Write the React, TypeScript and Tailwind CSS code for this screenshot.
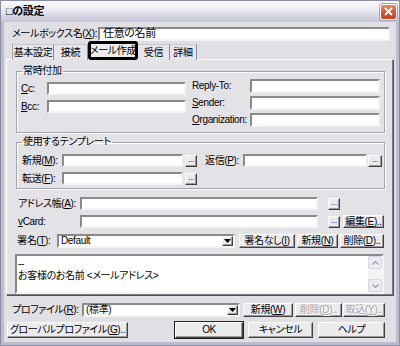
import React from "react";

const inp =
  "bg-white border-2 border-t-[#8a8a8a] border-l-[#8a8a8a] border-r-[#f4f4f4] border-b-[#f4f4f4]";
const btn =
  "flex items-center justify-center bg-[#ebebee] border border-t-white border-l-white border-r-[#404040] border-b-[#404040] shadow-[inset_-1px_-1px_0_#9a9a9a]";
const grp =
  "border border-[#a3a3ab] shadow-[inset_1px_1px_0_#fff,1px_1px_0_#fff]";

function U({ c }: { c: string }) {
  return <span className="underline underline-offset-[1px]">{c}</span>;
}

function Dots({ cls }: { cls: string }) {
  return (
    <div className={`${btn} ${cls} items-end pb-[2px] text-[8px]`}>
      <span className="leading-none">...</span>
    </div>
  );
}

function DropArrow() {
  return (
    <div className={`${btn} h-full w-[11px]`}>
      <svg width="7" height="4" viewBox="0 0 7 4">
        <path d="M0 0h7L3.5 4z" fill="#000" />
      </svg>
    </div>
  );
}

export default function App() {
  return (
    <div className="flex h-[346px] w-[400px] flex-col overflow-hidden whitespace-nowrap border border-[#8b8ba5] bg-[#bcbccf] font-['Liberation_Sans','Noto_Sans_CJK_JP',sans-serif] text-[10px] leading-none tracking-[-0.35px] text-black [font-feature-settings:'palt']">
      {/* title bar */}
      <div className="flex h-[21px] shrink-0 items-center bg-gradient-to-b from-[#fbfbfd] via-[#e6e6ee] to-[#c3c3d6] pl-[5px] pr-[2px]">
        <span className="text-[11px] font-bold">□の設定</span>
        <div className="ml-auto flex h-[16px] w-[17px] items-center justify-center rounded-[3px] border border-white bg-gradient-to-b from-[#ea8b6c] via-[#d8552f] to-[#c24422] shadow-[0_0_0_1px_#a0a0b8]">
          <svg width="9" height="9" viewBox="0 0 9 9">
            <path d="M1 1l7 7M8 1l-7 7" stroke="#fff" strokeWidth="1.8" />
          </svg>
        </div>
      </div>

      {/* body */}
      <div className="mx-[3px] mb-[3px] flex flex-1 flex-col bg-[#e0dfe3]">
        {/* mailbox name */}
        <div className="mt-[5px] flex h-[13px] items-center pl-[8px]">
          <div className="w-[86px]">
            メールボックス名(<U c="X" />):
          </div>
          <div className={`${inp} flex h-[14px] w-[292px] items-center pl-[3px] text-[11px]`}>任意の名前</div>
        </div>

        {/* tabs */}
        <div className="relative z-10 mt-[2px] flex h-[18px] items-end pl-[8px]">
          <div className="flex h-[16px] w-[42px] items-center justify-center border-x border-t border-x-[#a8a8b0] border-t-[#c8c8d0] border-r-[#8a8a92] bg-[#e6e5ea]">基本設定</div>
          <div className="flex h-[16px] w-[34px] items-center justify-center border-r border-t border-r-[#8a8a92] border-t-[#c8c8d0] bg-[#e6e5ea]">接続</div>
          <div className="flex h-[19px] w-[50px] items-center justify-center rounded-[3px] border-[3px] border-black bg-[#ededf0]">メール作成</div>
          <div className="flex h-[16px] w-[32px] items-center justify-center border-r border-t border-r-[#8a8a92] border-t-[#c8c8d0] bg-[#e6e5ea]">受信</div>
          <div className="flex h-[16px] w-[27px] items-center justify-center border-r border-t border-r-[#8a8a92] border-t-[#c8c8d0] bg-[#e6e5ea]">詳細</div>
        </div>

        {/* tab panel */}
        <div className="-mt-[1px] ml-[2px] flex h-[236px] w-[387px] flex-col border border-t-white border-l-white border-r-[#7c7c84] border-b-[#7c7c84] bg-[#e3e2e7] shadow-[1px_1px_0_#505058]">
          {/* group 1 */}
          <fieldset className={`${grp} ml-[9px] mt-[5px] w-[369px] pb-[5px]`}>
            <legend className="ml-[5px] px-[1px] leading-[12px]">常時付加</legend>
            <div className="flex items-start">
              <div className="ml-[4px] mt-[5px] flex flex-col gap-[5px]">
                <div className="flex h-[13px] items-center">
                  <div className="w-[26px]">
                    <U c="C" />c:
                  </div>
                  <div className={`${inp} h-[13px] w-[139px]`} />
                </div>
                <div className="flex h-[13px] items-center">
                  <div className="w-[26px]">
                    <U c="B" />cc:
                  </div>
                  <div className={`${inp} h-[13px] w-[139px]`} />
                </div>
              </div>
              <div className="ml-[6px] mt-[2px] flex flex-col gap-[3px]">
                <div className="flex h-[14px] items-center">
                  <div className="w-[58px]">Reply-To:</div>
                  <div className={`${inp} h-[14px] w-[130px]`} />
                </div>
                <div className="flex h-[14px] items-center">
                  <div className="w-[58px]">
                    <U c="S" />ender:
                  </div>
                  <div className={`${inp} h-[14px] w-[130px]`} />
                </div>
                <div className="flex h-[14px] items-center">
                  <div className="w-[58px]">
                    <U c="O" />rganization:
                  </div>
                  <div className={`${inp} h-[14px] w-[130px]`} />
                </div>
              </div>
            </div>
          </fieldset>

          {/* group 2 */}
          <fieldset className={`${grp} ml-[9px] mt-[3px] w-[369px] pb-[3px]`}>
            <legend className="ml-[5px] px-[1px] leading-[12px]">使用するテンプレート</legend>
            <div className="flex items-start">
              <div className="ml-[5px] mt-[6px] flex flex-col gap-[5px]">
                <div className="flex h-[13px] items-center">
                  <div className="w-[40px]">
                    新規(<U c="M" />):
                  </div>
                  <div className={`${inp} h-[13px] w-[121px]`} />
                  <Dots cls="ml-[2px] h-[12px] w-[12px]" />
                </div>
                <div className="flex h-[13px] items-center">
                  <div className="w-[40px]">
                    転送(<U c="F" />):
                  </div>
                  <div className={`${inp} h-[13px] w-[121px]`} />
                  <Dots cls="ml-[2px] h-[12px] w-[12px]" />
                </div>
              </div>
              <div className="ml-[8px] mt-[6px] flex h-[13px] items-center">
                <div className="w-[38px]">
                  返信(<U c="P" />):
                </div>
                <div className={`${inp} h-[13px] w-[124px]`} />
                <Dots cls="ml-[1px] h-[12px] w-[14px]" />
              </div>
            </div>
          </fieldset>

          {/* address book */}
          <div className="ml-[11px] mt-[8px] flex h-[13px] items-center">
            <div className="w-[62px]">
              アドレス帳(<U c="A" />):
            </div>
            <div className={`${inp} h-[13px] w-[238px]`} />
            <Dots cls="ml-[10px] h-[12px] w-[12px]" />
          </div>

          {/* vCard */}
          <div className="ml-[11px] mt-[5px] flex h-[13px] items-center">
            <div className="w-[62px]">
              <U c="v" />Card:
            </div>
            <div className={`${inp} h-[13px] w-[238px]`} />
            <Dots cls="ml-[10px] h-[12px] w-[12px]" />
            <div className={`${btn} ml-[3px] h-[13px] w-[41px]`}>
              編集(<U c="E" />)..
            </div>
          </div>

          {/* signature */}
          <div className="ml-[10px] mt-[6px] flex h-[14px] items-center">
            <div className="w-[40px]">
              署名(<U c="T" />):
            </div>
            <div className={`${inp} flex h-[14px] w-[178px] items-center pl-[2px]`}>
              <span className="flex-1">Default</span>
              <DropArrow />
            </div>
            <div className={`${btn} ml-[4px] h-[14px] w-[56px]`}>
              署名なし(<U c="I" />)
            </div>
            <div className={`${btn} ml-[2px] h-[14px] w-[41px]`}>
              新規(<U c="N" />)
            </div>
            <div className={`${btn} ml-[2px] h-[14px] w-[44px]`}>
              削除(<U c="D" />)..
            </div>
          </div>

          {/* text area */}
          <div className={`${inp} ml-[8px] mt-[6px] flex h-[46px] w-[369px]`}>
            <div className="flex-1 pl-[1px] pt-[2px] leading-[12px]">
              <div>--</div>
              <div>お客様のお名前 &lt;メールアドレス&gt;</div>
            </div>
            <div className="flex w-[14px] flex-col bg-[#f3f3f6]">
              <div className="flex h-[13px] items-center justify-center rounded-[2px] border border-[#d4d4de] bg-[#ececf2]">
                <svg width="7" height="4" viewBox="0 0 7 4">
                  <path d="M0.5 3.5L3.5 0.5L6.5 3.5" fill="none" stroke="#9a9aa8" strokeWidth="1.2" />
                </svg>
              </div>
              <div className="flex-1" />
              <div className="flex h-[13px] items-center justify-center rounded-[2px] border border-[#d4d4de] bg-[#ececf2]">
                <svg width="7" height="4" viewBox="0 0 7 4">
                  <path d="M0.5 0.5L3.5 3.5L6.5 0.5" fill="none" stroke="#9a9aa8" strokeWidth="1.2" />
                </svg>
              </div>
            </div>
          </div>
        </div>

        {/* profile */}
        <div className="mt-[8px] flex h-[14px] items-center pl-[8px]">
          <div className="w-[70px]">
            プロファイル(<U c="R" />):
          </div>
          <div className={`${inp} flex h-[14px] w-[158px] items-center pl-[2px]`}>
            <span className="flex-1">(標準)</span>
            <DropArrow />
          </div>
          <div className={`${btn} ml-[3px] h-[14px] w-[50px]`}>
            新規(<U c="W" />)
          </div>
          <div className={`${btn} ml-[2px] h-[14px] w-[47px] text-[#a5a5a8] [text-shadow:1px_1px_0_#fff]`}>
            削除(<U c="D" />)..
          </div>
          <div className={`${btn} ml-[1px] h-[14px] w-[42px] text-[#a5a5a8] [text-shadow:1px_1px_0_#fff]`}>
            取込(<U c="Y" />)..
          </div>
        </div>

        {/* bottom buttons */}
        <div className="mt-[5px] flex h-[16px] items-center pl-[3px]">
          <div className={`${btn} h-[16px] w-[121px]`}>
            グローバルプロファイル(<U c="G" />)..
          </div>
          <div className={`${btn} ml-[47px] h-[16px] w-[68px] outline outline-1 outline-[#202020]`}>OK</div>
          <div className={`${btn} ml-[5px] h-[16px] w-[65px]`}>キャンセル</div>
          <div className={`${btn} ml-[5px] h-[16px] w-[67px]`}>ヘルプ</div>
        </div>
      </div>
    </div>
  );
}
